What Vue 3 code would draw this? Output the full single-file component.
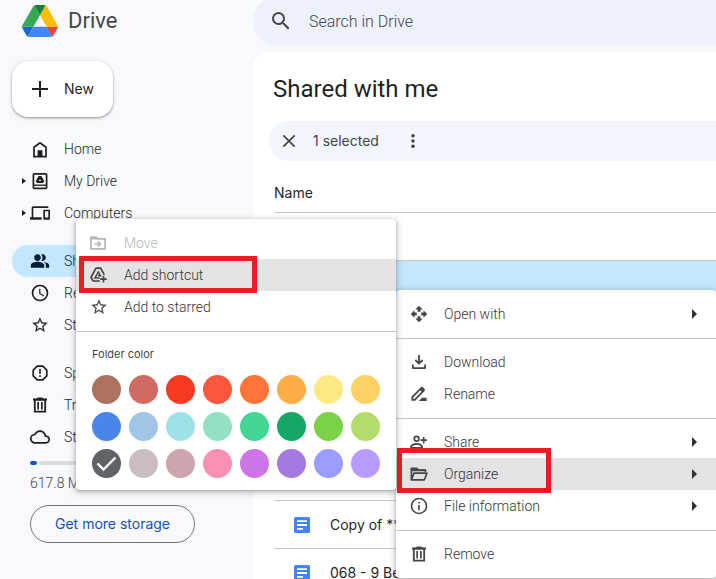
<script setup>
import { ref } from 'vue'

const icons = {
  home: '<path d="M4 17.6V8.2L10 3.700l6 4.500v9.400z" fill="none" stroke="currentColor" stroke-width="1.700"/><path d="M7.600 11.200h4.800v6.400H7.600z"/>',
  drive: '<rect x="3.400" y="2.900" width="13.200" height="14.400" rx=".8" fill="none" stroke="currentColor" stroke-width="1.700"/><path d="M3 13.500h14v1.400H3z"/><path fill-rule="evenodd" d="M8.600 5h2.800l2.800 4.900-1.200 2.100H7l-1.200-2.100zM10 7.900l-1.200 2.100h2.400z"/>',
  computers: '<g transform="scale(.8333)"><path d="M4 6h18V4H4c-1.100 0-2 .9-2 2v11H0v3h14v-3H4V6zm19 2h-6c-.55 0-1 .45-1 1v10c0 .55.45 1 1 1h6c.55 0 1-.45 1-1V9c0-.55-.45-1-1-1zm-1 9.500h-4V10h4z"/></g>',
  people: '<g transform="scale(.8333)"><path d="M16.670 13.130C18.040 14.060 19 15.320 19 17v3h4v-3c0-2.180-3.570-3.470-6.330-3.870zM15 12c2.210 0 4-1.790 4-4s-1.790-4-4-4c-.47 0-.91.1-1.330.24C14.500 5.270 15 6.580 15 8s-.5 2.730-1.330 3.760c.42.14.86.24 1.330.24zM9 12c2.210 0 4-1.790 4-4s-1.790-4-4-4-4 1.790-4 4 1.790 4 4 4zM9 13c-2.670 0-8 1.340-8 4v3h16v-3c0-2.660-5.330-4-8-4z"/></g>',
  clock: '<g transform="scale(.8333)"><path d="M12 2a10 10 0 1 0 0 20 10 10 0 0 0 0-20zm0 18a8 8 0 1 1 0-16 8 8 0 0 1 0 16zm.5-13H11v6l5.250 3.150.75-1.230-4.500-2.670z"/></g>',
  star: '<g transform="translate(.6 .6) scale(.78)"><path d="M22 9.240l-7.190-.62L12 2 9.190 8.630 2 9.240l5.460 4.730L5.820 21 12 17.270 18.180 21l-1.630-7.030L22 9.240zM12 15.400l-3.760 2.270 1-4.280-3.320-2.880 4.380-.38L12 6.100l1.710 4.040 4.380.38-3.320 2.880 1 4.280z"/></g>',
  spam: '<path d="M7.200 3.200h5.600l4 4v5.600l-4 4H7.200l-4-4V7.200z" fill="none" stroke="currentColor" stroke-width="1.700" stroke-linejoin="round"/><path d="M9.200 5.800h1.600v5.200H9.200zM9.200 12.200h1.600v1.700H9.200z"/>',
  trash: '<path d="M4.800 4.600h10.400v12H4.800z" fill="none" stroke="currentColor" stroke-width="1.800"/><path d="M3 3.500h4L7.800 2.500h4.400l.8 1h4v1.900H3zM7.300 7h1.700v7.500H7.300zM11 7h1.700v7.500H11z"/>',
  cloud: '<g transform="scale(.8333)"><path d="M19.350 10.040C18.670 6.590 15.640 4 12 4 9.110 4 6.600 5.640 5.350 8.040 2.340 8.360 0 10.910 0 14c0 3.310 2.690 6 6 6h13c2.760 0 5-2.240 5-5 0-2.640-2.050-4.780-4.650-4.960zM19 18H6c-2.210 0-4-1.790-4-4 0-2.050 1.530-3.760 3.560-3.970l1.070-.11.5-.95C8.080 7.140 9.940 6 12 6c2.620 0 4.880 1.860 5.390 4.430l.3 1.500 1.530.11c1.560.1 2.780 1.410 2.780 2.960 0 1.650-1.350 3-3 3z"/></g>',
  move: '<path d="M1.900 4.300h5.300l1.600 1.600h7.300v10H1.900z" fill="none" stroke="currentColor" stroke-width="1.700" stroke-linejoin="round"/><path d="M1.500 3.800h5.700l1.900 2.600H1.500z"/><path d="M5.300 10.900h6M9 8.400l2.500 2.500L9 13.400" fill="none" stroke="currentColor" stroke-width="1.500"/>',
  shortcut: '<path d="M10.800 16H4.300L1.900 12.500 7 3.200h4.600l3.700 6.400" fill="none" stroke="currentColor" stroke-width="1.700" stroke-linejoin="round"/><path d="M10.600 12.900H6l3.300-5.900 2.200 3.700H9" fill="none" stroke="currentColor" stroke-width="1.500"/><path d="M14.500 10.800v6.600M11.200 14.100h6.600" fill="none" stroke="currentColor" stroke-width="1.700"/>',
  open: '<g transform="translate(1 1) scale(.75)"><path d="M10 9h4V6h3l-5-5-5 5h3v3zm-1 1H6V7l-5 5 5 5v-3h3v-4zm14 2l-5-5v3h-3v4h3v3l5-5zm-9 3h-4v3H7l5 5 5-5h-3v-3z"/></g>',
  download: '<path d="M10 3v8.500M6.300 8l3.700 3.700L13.700 8M3.900 12.500v3.600h12.200v-3.600" fill="none" stroke="currentColor" stroke-width="1.800" stroke-linejoin="round"/>',
  rename: '<path d="M3.300 13.200l8.600-8.900c.6-.6 1.300-.6 1.900 0l.7.700c.6.600.6 1.300 0 1.900l-8.700 8.900H3.300z" fill="none" stroke="currentColor" stroke-width="1.800"/><path d="M10.200 5.300l3.300 3.200 1.800-2-3.100-3.100zM9.800 16.900l3.200-3.200h4.600v3.200z"/>',
  share: '<path d="M7.600 3.500a3.200 3.200 0 1 0 0 6.400 3.200 3.200 0 0 0 0-6.400zm0 1.700a1.500 1.500 0 1 1 0 3 1.500 1.500 0 0 1 0-3zM1.300 16.700v-2.100c0-2.200 3.600-3.500 6.300-3.500s6.300 1.300 6.300 3.500v2.100zm1.700-1.700h9.200c0-1.200-2.500-2.200-4.600-2.200s-4.600 1-4.600 2.200z"/><path d="M14.700 5v6.400M11.500 8.200h6.400" fill="none" stroke="currentColor" stroke-width="1.700"/>',
  organize: '<path d="M2.400 15.500V4.400h5.200l1.600 1.700h7.300v2M2.400 15.800l2.500-6.600h13l-2.500 6.600z" fill="none" stroke="currentColor" stroke-width="1.700" stroke-linejoin="round"/><path d="M1.800 4h6l1.400 1.600h7.500v1.600H1.800z"/>',
  info: '<circle cx="10" cy="10" r="7.500" fill="none" stroke="currentColor" stroke-width="1.600"/><path d="M9.200 9h1.600v5.200H9.200zM9.200 5.900h1.600v1.600H9.200z"/>',
}

const navGroups = [
  [
    { label: 'Home', icon: 'home' },
    { label: 'My Drive', icon: 'drive', expandable: true },
    { label: 'Computers', icon: 'computers', expandable: true },
  ],
  [
    { label: 'Shared with me', icon: 'people', active: true },
    { label: 'Recent', icon: 'clock' },
    { label: 'Starred', icon: 'star' },
  ],
  [
    { label: 'Spam', icon: 'spam' },
    { label: 'Trash', icon: 'trash' },
    { label: 'Storage', icon: 'cloud' },
  ],
]

const files = [
  {}, { selected: true }, {}, {}, {}, {},
  { name: 'Copy of ****' },
  { name: '068 - 9 Be' },
]

const contextMenu = [
  [{ label: 'Open with', icon: 'open', more: true }],
  [{ label: 'Download', icon: 'download' }, { label: 'Rename', icon: 'rename' }],
  [
    { label: 'Share', icon: 'share', more: true },
    { label: 'Organize', icon: 'organize', more: true, current: true },
    { label: 'File information', icon: 'info', more: true },
  ],
  [{ label: 'Remove', icon: 'trash' }],
]

const organizeMenu = [
  { label: 'Move', icon: 'move', disabled: true },
  { label: 'Add shortcut', icon: 'shortcut', current: true },
  { label: 'Add to starred', icon: 'star' },
]

const colors = [
  '#ac725e', '#d06b64', '#f83a22', '#fa573c', '#ff7537', '#ffad46', '#fbe983', '#fad165',
  '#4986e7', '#9fc6e7', '#9fe1e7', '#92e1c0', '#42d692', '#16a765', '#7bd148', '#b3dc6c',
  '#5f6368', '#cabdbf', '#cca6ac', '#f691b2', '#cd74e6', '#a47ae2', '#9a9cff', '#b99aff',
]
const folderColor = ref('#5f6368')
</script>

<template>
  <div class="page">
    <aside class="sidebar">
      <a class="brand" href="#">
        <svg class="logo" viewBox="0 0 87.3 78" aria-hidden="true">
          <path d="m6.600 66.850 3.850 6.650c.8 1.400 1.950 2.500 3.300 3.300l13.750-23.800h-27.500c0 1.550.4 3.100 1.200 4.500z" fill="#1967d2" />
          <path d="m43.650 25-13.750-23.800c-1.350.8-2.500 1.900-3.300 3.300l-25.400 44a9.060 9.060 0 0 0 -1.200 4.500h27.500z" fill="#34a853" />
          <path d="m73.550 76.800c1.350-.8 2.500-1.900 3.300-3.300l1.600-2.750 7.650-13.250c.8-1.400 1.200-2.950 1.200-4.500h-27.502l5.852 11.500z" fill="#ea4335" />
          <path d="m43.650 25 13.750-23.800c-1.350-.8-2.900-1.200-4.500-1.200h-18.500c-1.600 0-3.150.45-4.500 1.200z" fill="#188038" />
          <path d="m59.800 53h-32.300l-13.750 23.800c1.350.8 2.900 1.200 4.500 1.200h50.800c1.600 0 3.150-.45 4.500-1.200z" fill="#4285f4" />
          <path d="m73.400 26.500-12.700-22c-.8-1.400-1.950-2.500-3.300-3.300l-13.750 23.800 16.150 28h27.450c0-1.550-.4-3.100-1.200-4.500z" fill="#fbbc04" />
        </svg>
        <span>Drive</span>
      </a>

      <button class="new" type="button">
        <svg viewBox="0 0 20 20" aria-hidden="true"><path d="M9 2h2v7h7v2h-7v7H9v-7H2V9h7z" /></svg>
        <span>New</span>
      </button>

      <nav class="nav">
        <ul v-for="(group, g) in navGroups" :key="g">
          <li v-for="item in group" :key="item.label">
            <a href="#" class="nav-item" :class="{ active: item.active }">
              <span class="caret" :class="{ shown: item.expandable }"></span>
              <svg class="icon" viewBox="0 0 20 20" aria-hidden="true" v-html="icons[item.icon]"></svg>
              <span>{{ item.label }}</span>
            </a>
          </li>
        </ul>
      </nav>

      <section class="quota">
        <div class="meter"><span class="used"></span><span class="free"></span></div>
        <p>617.8 MB of 15 GB used</p>
        <button type="button">Get more storage</button>
      </section>
    </aside>

    <div class="content">
      <label class="search">
        <svg viewBox="0 0 24 24" aria-hidden="true"><path d="M15.500 14h-.79l-.28-.27A6.471 6.471 0 0 0 16 9.500 6.500 6.500 0 1 0 9.500 16c1.610 0 3.090-.59 4.230-1.570l.27.28v.79l5 4.990L20.490 19l-4.990-5zm-6 0a4.500 4.500 0 1 1 0-9 4.500 4.500 0 0 1 0 9z" /></svg>
        <input type="search" placeholder="Search in Drive" aria-label="Search in Drive" />
      </label>

      <main class="panel">
        <h1>Shared with me</h1>
        <div class="selection">
          <button type="button" aria-label="Clear selection">
            <svg viewBox="0 0 20 20" aria-hidden="true"><path d="M4.300 4.300l11.400 11.400M15.700 4.300L4.300 15.700" fill="none" stroke="currentColor" stroke-width="1.700" /></svg>
          </button>
          <span class="count">1 selected</span>
          <button type="button" aria-label="More actions">
            <svg viewBox="0 0 20 20" aria-hidden="true"><circle cx="10" cy="4.700" r="1.800" /><circle cx="10" cy="10" r="1.800" /><circle cx="10" cy="15.300" r="1.800" /></svg>
          </button>
        </div>
        <table>
          <thead>
            <tr><th scope="col">Name</th></tr>
          </thead>
          <tbody>
            <tr v-for="(file, i) in files" :key="i" :class="{ selected: file.selected }">
              <td>
                <div v-if="file.name" class="file">
                  <svg viewBox="0 0 16 16" aria-hidden="true">
                    <rect width="16" height="16" rx="1.500" fill="#4285f4" />
                    <path d="M3 3.200h10v1.800H3zM3 7.100h10v1.800H3zM3 11h6v1.800H3z" fill="#fff" />
                  </svg>
                  <span>{{ file.name }}</span>
                </div>
              </td>
            </tr>
          </tbody>
        </table>
      </main>
    </div>

    <div class="menu context" role="menu">
      <ul v-for="(group, g) in contextMenu" :key="g">
        <li v-for="item in group" :key="item.label">
          <button type="button" role="menuitem" :class="{ current: item.current }">
            <svg class="icon" viewBox="0 0 20 20" aria-hidden="true" v-html="icons[item.icon]"></svg>
            <span>{{ item.label }}</span>
            <span v-if="item.more" class="more"></span>
          </button>
        </li>
      </ul>
      <div class="marker marker-organize"></div>
    </div>

    <div class="menu organize" role="menu">
      <ul>
        <li v-for="item in organizeMenu" :key="item.label">
          <button type="button" role="menuitem" :disabled="item.disabled" :class="{ current: item.current }">
            <svg class="icon" viewBox="0 0 20 20" aria-hidden="true" v-html="icons[item.icon]"></svg>
            <span>{{ item.label }}</span>
          </button>
        </li>
      </ul>
      <section class="palette">
        <h2>Folder color</h2>
        <div class="swatches">
          <button
            v-for="color in colors"
            :key="color"
            type="button"
            :aria-label="color"
            :aria-pressed="folderColor === color"
            :style="{ background: color }"
            @click="folderColor = color"
          >
            <svg v-if="folderColor === color" viewBox="0 0 29 29" aria-hidden="true"><path d="M5.500 14.500l6 6L23.500 8.500" fill="none" stroke="#fff" stroke-width="2.400" /></svg>
          </button>
        </div>
      </section>
      <div class="marker marker-shortcut"></div>
    </div>
  </div>
</template>

<style>
body {
  margin: 0;
  background: #f8f9fd;
}
</style>

<style scoped>
.page {
  position: relative;
  display: flex;
  height: 100vh;
  overflow: hidden;
  background: #f8f9fd;
  color: #1f1f1f;
  font: 300 14px/20px Roboto, "Liberation Sans", sans-serif;
}
ul, p, h1, h2 {
  margin: 0;
  padding: 0;
  list-style: none;
}
button {
  border: 0;
  padding: 0;
  background: none;
  color: inherit;
  font: inherit;
  cursor: pointer;
}
a {
  color: inherit;
  text-decoration: none;
}
svg {
  display: block;
  flex: none;
  fill: currentColor;
}
.icon {
  width: 20px;
  height: 20px;
}

/* Sidebar */
.sidebar {
  flex: none;
  width: 253px;
}
.brand {
  display: flex;
  align-items: center;
  gap: 10px;
  height: 42px;
  padding-left: 22px;
  color: #444746;
  font-size: 22px;
  font-weight: 400;
}
.logo {
  width: 36px;
  height: 32px;
}
.new {
  display: flex;
  align-items: center;
  gap: 14px;
  height: 56px;
  margin: 19px 0 16px 12px;
  padding: 0 19px 0 18px;
  border-radius: 16px;
  background: #fff;
  box-shadow: 0 1px 2px rgba(60, 64, 67, .4), 0 1px 3px 1px rgba(60, 64, 67, .15);
}
.new,
.quota button,
.count,
th,
.file {
  font-family: Inter, Roboto, sans-serif;
  font-weight: 400;
}
.new svg {
  width: 20px;
  height: 20px;
}
.nav {
  display: grid;
  gap: 16px;
}
.nav-item {
  display: flex;
  align-items: center;
  height: 32px;
  margin: 0 16px 0 12px;
  border-radius: 16px;
}
.nav-item.active {
  background: #c2e7ff;
  color: #001d35;
}
.nav-item .icon {
  margin-right: 14px;
}
.caret {
  width: 8px;
  padding-left: 10px;
}
.caret.shown::before {
  content: "";
  display: block;
  width: 4px;
  height: 6px;
  background: #1f1f1f;
  clip-path: polygon(0 0, 100% 50%, 0 100%);
}
.quota {
  padding: 8px 16px 0 30px;
}
.meter {
  display: flex;
  gap: 2px;
  height: 4px;
}
.meter span {
  border-radius: 2px;
}
.used {
  width: 7px;
  background: #0b57d0;
}
.free {
  flex: 1;
  background: #dadce0;
}
.quota p {
  margin: 8px 0 12px;
  color: #444746;
}
.quota button {
  height: 38px;
  padding: 0 24px;
  border: 1px solid #747775;
  border-radius: 19px;
  color: #1a4fb8;
}

/* Content */
.content {
  flex: 1;
  min-width: 0;
}
.search {
  display: flex;
  align-items: center;
  gap: 16px;
  height: 48px;
  margin-top: -3px;
  padding-left: 16px;
  border-radius: 24px 0 0 24px;
  background: #edf1fb;
  color: #444746;
}
.search svg {
  width: 24px;
  height: 24px;
}
.search input {
  flex: 1;
  min-width: 0;
  padding: 2px 0 0;
  border: 0;
  outline: 0;
  background: none;
  color: inherit;
  font: inherit;
  font-size: 16px;
}
.search input::placeholder {
  color: #444746;
  opacity: 1;
}
.panel {
  margin-top: 7px;
  padding: 21px 0 0 16px;
  border-radius: 16px 0 0 0;
  background: #fff;
}
h1 {
  padding-left: 4px;
  font-size: 24px;
  font-weight: 400;
  line-height: 32px;
}
.selection {
  display: flex;
  align-items: center;
  height: 40px;
  margin: 16px 0 12px;
  padding-left: 10px;
  border-radius: 20px 0 0 20px;
  background: #f2f5fc;
  color: #444746;
}
.selection svg {
  width: 20px;
  height: 20px;
}
.count {
  margin: 0 24px 0 14px;
}
table {
  width: calc(100% - 5px);
  margin-left: 5px;
  border-collapse: separate;
  border-spacing: 0;
  table-layout: fixed;
}
th, td {
  box-sizing: border-box;
  padding: 0;
  border-bottom: 1px solid #c7c7c7;
  text-align: left;
}
th {
  height: 40px;
}
td {
  height: 48px;
}
.selected td {
  background: #c2e7ff;
}
.file {
  display: flex;
  align-items: center;
  gap: 20px;
  padding-left: 20px;
}
.file svg {
  width: 16px;
  height: 16px;
}

/* Menus */
.menu {
  position: absolute;
  width: 320px;
  border-radius: 4px;
  background: #fff;
  box-shadow: 0 2px 6px 2px rgba(60, 64, 67, .2), 0 1px 3px rgba(60, 64, 67, .35);
  color: #444746;
}
.menu li span {
  color: #333;
}
.context {
  top: 290px;
  left: 396px;
}
.organize {
  top: 219px;
  left: 76px;
}
.menu ul {
  padding: 8px 0;
}
.menu ul + ul {
  padding-top: 7px;
  border-top: 1px solid #c7c7c7;
}
.menu li button {
  display: flex;
  align-items: center;
  gap: 15px;
  width: 100%;
  height: 32px;
  padding: 0 19px 0 13px;
}
.menu li button.current {
  background: #e3e3e3;
}
.menu li button:disabled,
.menu li button:disabled span {
  color: #b4b5b5;
}
.menu li .more {
  width: 5px;
  height: 10px;
  margin-left: auto;
  background: #333;
  clip-path: polygon(0 0, 100% 50%, 0 100%);
}
.palette {
  padding: 12px 16px;
  border-top: 1px solid #c7c7c7;
}
.palette h2 {
  margin-bottom: 11px;
  font-family: Inter, Roboto, sans-serif;
  font-size: 11px;
  font-weight: 400;
  line-height: 20px;
}
.swatches {
  display: grid;
  grid-template-columns: repeat(8, 29px);
  gap: 8px;
}
.swatches button {
  height: 29px;
  border-radius: 50%;
}
.marker {
  position: absolute;
  box-sizing: border-box;
  border: 5px solid #eb1c24;
  pointer-events: none;
}
.marker-shortcut {
  top: 37px;
  left: 3px;
  width: 178px;
  height: 37px;
}
.marker-organize {
  top: 158px;
  left: 1px;
  width: 154px;
  height: 45px;
}
</style>
